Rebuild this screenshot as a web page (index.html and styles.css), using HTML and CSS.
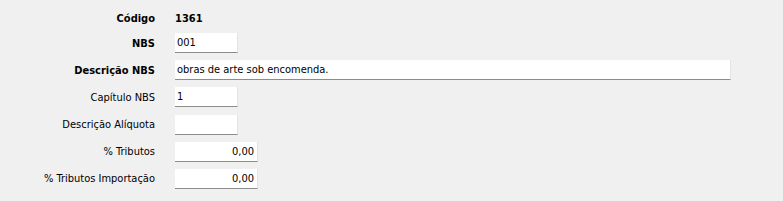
FILE: index.html
```html
<!DOCTYPE html>
<html>
<head>
<meta charset="utf-8">
<link rel="stylesheet" href="styles.css">
</head>
<body>
<div class="form">
  <div class="row row-code">
    <div class="label bold">Código</div>
    <div class="value bold">1361</div>
  </div>
  <div class="rows">
    <div class="row">
      <div class="label bold">NBS</div>
      <div class="field w-sm">001</div>
    </div>
    <div class="row">
      <div class="label bold">Descrição NBS</div>
      <div class="field w-lg">obras de arte sob encomenda.</div>
    </div>
    <div class="row">
      <div class="label">Capítulo NBS</div>
      <div class="field w-sm">1</div>
    </div>
    <div class="row">
      <div class="label">Descrição Alíquota</div>
      <div class="field w-sm"></div>
    </div>
    <div class="row">
      <div class="label">% Tributos</div>
      <div class="field w-md num">0,00</div>
    </div>
    <div class="row">
      <div class="label">% Tributos Importação</div>
      <div class="field w-md num">0,00</div>
    </div>
  </div>
</div>
</body>
</html>
```

FILE: styles.css
```css
html, body {
  margin: 0;
  padding: 0;
  background: #f0f0f0;
}
body {
  width: 783px;
  height: 201px;
  overflow: hidden;
  font-family: "DejaVu Sans Condensed", "DejaVu Sans", sans-serif;
  font-stretch: condensed;
  font-size: 11px;
  color: #000;
}
.form {
  padding-top: 8px;
}
.rows {
  display: flex;
  flex-direction: column;
  gap: 7.2px;
  margin-top: 5px;
}
.row {
  display: flex;
  align-items: center;
  height: 20px;
  gap: 20px;
}
.label {
  width: 155px;
  text-align: right;
  flex: none;
  white-space: nowrap;
}
.bold {
  font-weight: bold;
}
.field {
  box-sizing: border-box;
  height: 20px;
  background: #fff;
  border-bottom: 1px solid #8c8c8c;
  border-right: 1px solid #e3e3e3;
  padding: 0 3px 0 2px;
  line-height: 19px;
  white-space: nowrap;
}
.w-sm { width: 63px; }
.w-md { width: 83px; }
.w-lg { width: 556px; }
.num { text-align: right; }
```
